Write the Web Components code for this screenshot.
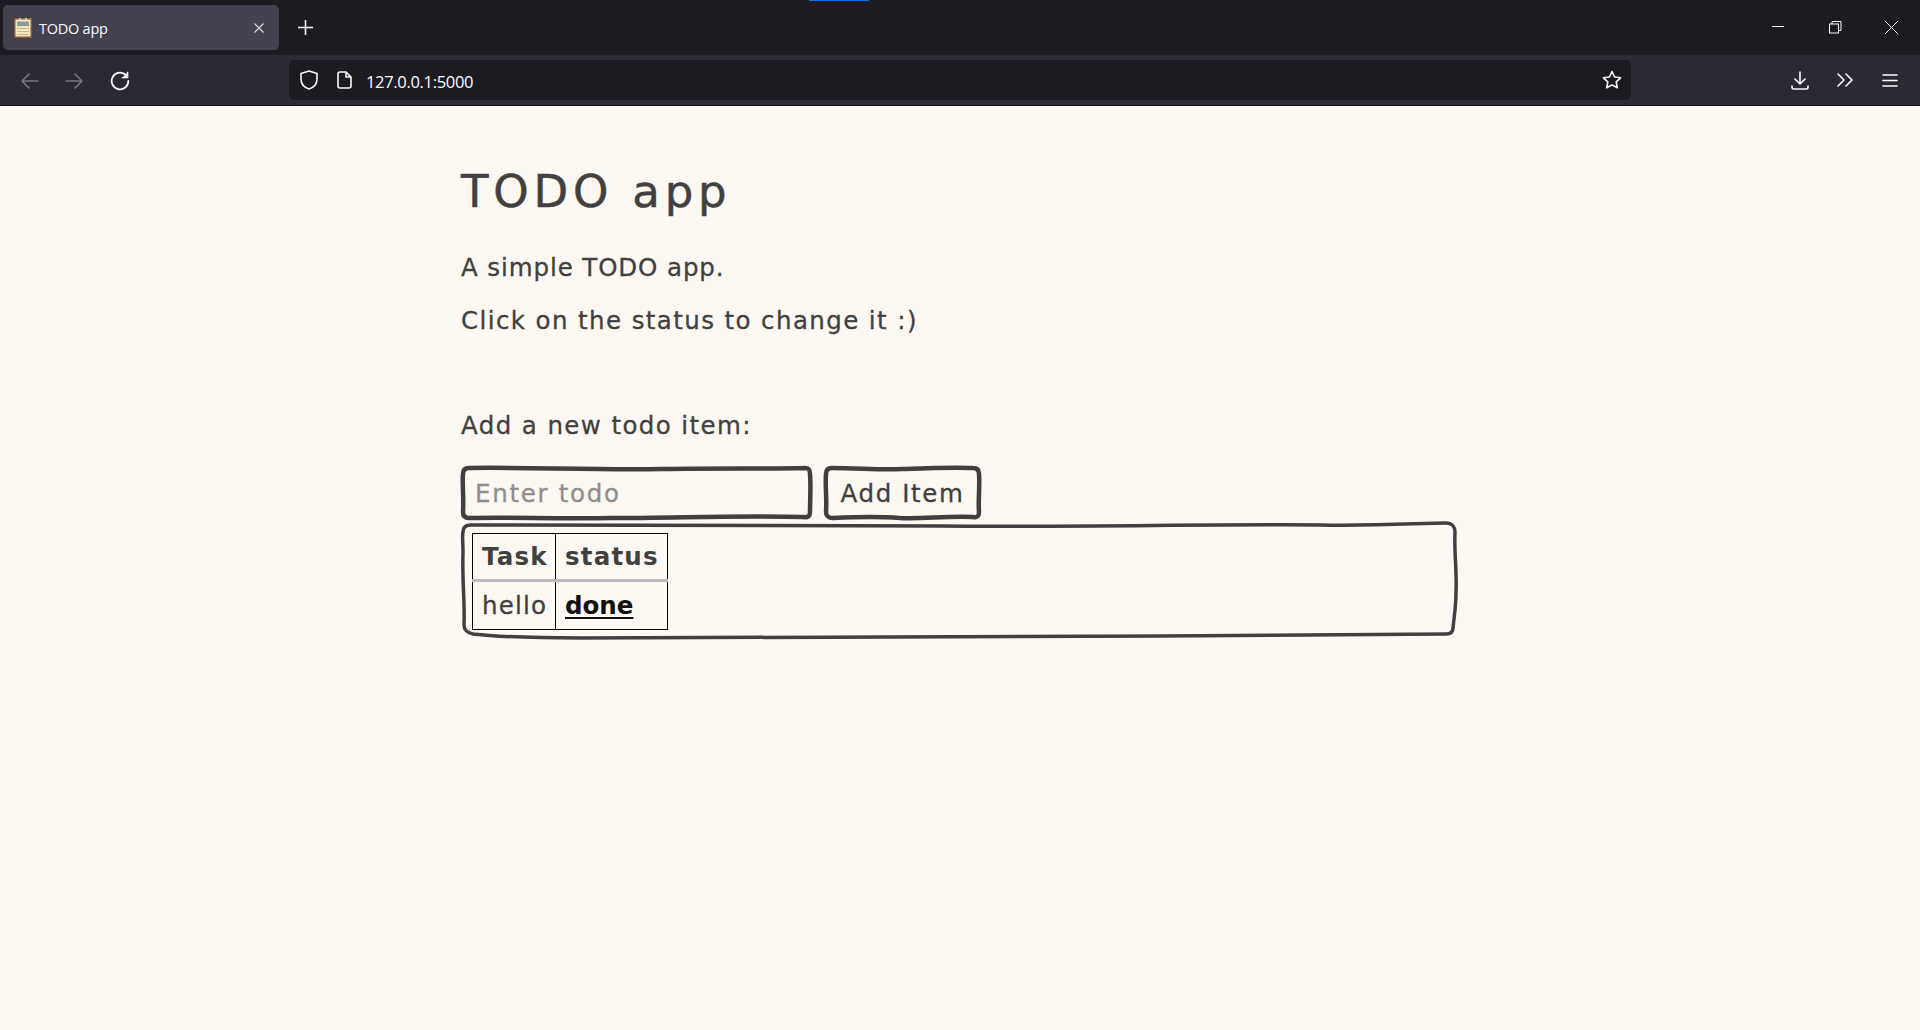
<!DOCTYPE html>
<html>
<head>
<meta charset="utf-8">
<title>TODO app</title>
<style>
    html, body { margin: 0; height: 100%; }
    body { background: #fdf8f2; display: flex; flex-direction: column; height: 1030px; overflow: hidden; }
</style>
</head>
<body>
<browser-tabstrip></browser-tabstrip>
<browser-toolbar url="127.0.0.1:5000"></browser-toolbar>
<todo-page></todo-page>

<script>
class BrowserTabstrip extends HTMLElement {
    constructor() {
        super();
        this.attachShadow({ mode: 'open' });
    }

    connectedCallback() {
        this.shadowRoot.innerHTML = `
        <style>
            :host {
                display: flex;
                align-items: flex-start;
                position: relative;
                height: 55px;
                background: #1c1b22;
                color: #fbfbfe;
                font-family: "Open Sans", "Liberation Sans", sans-serif;
                flex: none;
            }
            .tab {
                display: flex;
                align-items: center;
                box-sizing: border-box;
                width: 276px;
                height: 45px;
                margin: 5px 0 0 3px;
                padding: 1px 15px 0 11px;
                background: #42414d;
                border-radius: 5px;
                font-size: 14.5px;
                letter-spacing: -0.25px;
            }
            .fav { width: 18px; height: 20px; margin-right: 7px; }
            .title { flex: 1; }
            .plus { margin: 20px 0 0 19px; width: 15px; height: 15px; }
            .win { margin-left: auto; display: flex; align-items: center; height: 13px; margin-top: 21px; padding-right: 22px; gap: 43.5px; }
            .win svg { display: block; width: 13px; height: 13px; }
            .accent { position: absolute; left: 809px; top: 0; width: 60px; height: 1px; background: #0a6fd8; }
            svg { fill: none; stroke: currentColor; }
        </style>
        <div class="accent"></div>
        <div class="tab">
            <svg class="fav" viewBox="0 0 18 20" style="stroke:none">
                <rect width="18" height="20" fill="#8b5a34"/>
                <rect x="1.5" y="1.5" width="15" height="17" fill="#f3e6c4"/>
                <rect x="3" y="3.500" width="12" height="4.500" fill="#8c9a9c"/>
                <rect x="5" y="0" width="2" height="2" fill="#cfcabc"/>
                <rect x="11" y="0" width="2" height="2" fill="#cfcabc"/>
                <rect x="3" y="10" width="12" height="1" fill="#cdb98a"/>
                <rect x="3" y="13" width="12" height="1" fill="#cdb98a"/>
                <rect x="3" y="16" width="12" height="1" fill="#cdb98a"/>
            </svg>
            <span class="title">TODO app</span>
            <svg width="10" height="10" viewBox="0 0 10 10" stroke-width="1.2" style="color:#d8d8dc"><path d="M0.5 0.5l9 9M9.5 0.5l-9 9"/></svg>
        </div>
        <svg class="plus" viewBox="0 0 15 15" stroke-width="1.6"><path d="M7.5 0v15M0 7.5h15"/></svg>
        <div class="win">
            <svg viewBox="0 0 13 13" stroke-width="1"><path d="M0 5.500h12"/></svg>
            <svg viewBox="0 0 13 13" stroke-width="1"><rect x="0.5" y="3" width="9" height="9"/><path d="M3 3V0.5h9V9.500H9.500"/></svg>
            <svg viewBox="0 0 13 13" stroke-width="1"><path d="M0 0l13 13M13 0L0 13"/></svg>
        </div>
        `;
    }
}

class BrowserToolbar extends HTMLElement {
    constructor() {
        super();
        this.attachShadow({ mode: 'open' });
    }

    connectedCallback() {
        const url = this.getAttribute('url');
        this.shadowRoot.innerHTML = `
        <style>
            :host {
                display: flex;
                align-items: center;
                box-sizing: border-box;
                height: 51px;
                background: #2b2a33;
                border-bottom: 1px solid #0c0c0d;
                color: #fbfbfe;
                font-family: "Open Sans", "Liberation Sans", sans-serif;
                flex: none;
            }
            svg { fill: none; stroke: currentColor; stroke-width: 1.6; stroke-linecap: round; stroke-linejoin: round; display: block; flex: none; }
            .nav { display: flex; align-items: center; gap: 26px; padding: 2px 0 0 21px; width: 289px; box-sizing: border-box; }
            .off { color: #77767d; }
            .urlbar {
                display: flex;
                align-items: center;
                box-sizing: border-box;
                width: 1342px;
                height: 40px;
                padding: 0 9px 0 11px;
                background: #1c1b22;
                border-radius: 5px;
                font-size: 16.5px;
                letter-spacing: -0.32px;
            }
            .url { flex: 1; margin-left: 14px; padding-top: 2px; }
            .tools { display: flex; align-items: center; gap: 28px; padding-left: 160px; }
        </style>
        <div class="nav">
            <svg class="off" width="18" height="16" viewBox="0 0 18 16"><path d="M17 8H1M8 1L1 8l7 7"/></svg>
            <svg class="off" width="18" height="16" viewBox="0 0 18 16"><path d="M1 8h16M10 1l7 7-7 7"/></svg>
            <svg width="20" height="20" viewBox="0 0 18 18" style="margin-left:1px"><path d="M16.500 9A7.500 7.500 0 1 1 13.500 3"/><path d="M16 1v5h-5" fill="currentColor" stroke-width="1"/></svg>
        </div>
        <div class="urlbar">
            <svg width="18" height="20" viewBox="0 0 18 20"><path d="M9 1l8 2.500V9c0 5-3.500 8.500-8 10C4.500 17.500 1 14 1 9V3.500z"/></svg>
            <svg width="15" height="18" viewBox="0 0 15 18" style="margin-left:19px"><path d="M3 1h6l5 5v9a2 2 0 0 1-2 2H3a2 2 0 0 1-2-2V3a2 2 0 0 1 2-2zM9 1v5h5"/></svg>
            <span class="url">${url}</span>
            <svg width="20" height="20" viewBox="0 0 20 20"><path d="M10 1.500l2.600 5.500 6 .8-4.400 4.100 1.100 5.900L10 14.900l-5.300 2.900 1.100-5.900L1.400 7.800l6-.8z"/></svg>
        </div>
        <div class="tools">
            <svg width="18" height="19" viewBox="0 0 18 19"><path d="M9 1v12M4 8l5 5 5-5M1 15v1.500A1.500 1.500 0 0 0 2.500 18h13a1.500 1.500 0 0 0 1.500-1.500V15"/></svg>
            <svg width="17" height="14" viewBox="0 0 17 14"><path d="M1 1l6 6-6 6M9 1l6 6-6 6"/></svg>
            <svg width="16" height="13" viewBox="0 0 16 13"><path d="M1 1h14M1 6.500h14M1 12h14"/></svg>
        </div>
        `;
    }
}

// hand drawn outline, path is given in the box's own pixels
class SketchBox extends HTMLElement {
    constructor() {
        super();
        this.attachShadow({ mode: 'open' });
    }

    connectedCallback() {
        const w = this.getAttribute('w');
        const h = this.getAttribute('h');
        this.shadowRoot.innerHTML = `
        <style>
            :host {
                display: block;
                position: relative;
                box-sizing: border-box;
                width: ${w}px;
                height: ${h}px;
            }
            svg { position: absolute; left: 0; top: 0; pointer-events: none; overflow: visible; }
            path { fill: none; stroke: #41403e; stroke-width: ${this.getAttribute('sw') || 3}; stroke-linejoin: round; }
        </style>
        <slot></slot>
        <svg width="${w}" height="${h}" viewBox="0 0 ${w} ${h}"><path d="${this.getAttribute('d')}"/></svg>
        `;
    }
}

class TodoForm extends HTMLElement {
    constructor() {
        super();
        this.attachShadow({ mode: 'open' });
    }

    connectedCallback() {
        this.shadowRoot.innerHTML = `
        <style>
            :host { display: flex; gap: 12px; font: inherit; letter-spacing: 1.6px; -webkit-text-stroke: 0.3px; }
            input, button {
                box-sizing: border-box;
                width: 100%;
                height: 100%;
                background: none;
                border: 0;
                outline: 0;
                margin: 0;
                font: inherit;
                letter-spacing: inherit;
                -webkit-text-stroke: inherit;
                color: #41403e;
            }
            input { padding: 0 0 0 14px; letter-spacing: 1.7px; }
            input::placeholder { color: #8e8d8b; opacity: 1; }
            button { padding: 0; }
        </style>
        <sketch-box w="351" h="54" sw="4.5" d="M8 2C60 1 130 4 200 3 C260 2 310 3 344 2 C348 2 349 4 349 8 C350 20 349 36 349 46 C349 50 347 52 342 51 C280 49 215 52 150 52 C95 53 50 51 8 52 C4 52 2 50 2 46 C3 30 1 18 2 8 C2 4 4 2 8 2Z">
            <input placeholder="Enter todo">
        </sketch-box>
        <sketch-box w="157" h="54" sw="4.5" d="M8 2C35 2 55 4 78 3 C105 2 130 1 149 2 C153 2 155 4 155 8 C156 20 154 34 155 46 C155 50 153 52 149 51 C120 50 100 53 76 52 C50 50 30 51 8 52 C4 52 2 49 2 46 C3 32 1 20 2 8 C2 4 4 2 8 2Z">
            <button type="button">Add Item</button>
        </sketch-box>
        `;
    }
}

class TodoTable extends HTMLElement {
    constructor() {
        super();
        this.attachShadow({ mode: 'open' });
    }

    connectedCallback() {
        this.shadowRoot.innerHTML = `
        <style>
            :host { display: block; padding: 11px 0 0 11px; font: inherit; letter-spacing: 1.2px; }
            table { border-collapse: collapse; font: inherit; color: inherit; }
            th, td {
                border: 1px solid #000;
                padding: 0 7px 0 9px;
                text-align: left;
                box-sizing: border-box;
            }
            th { height: 47px; font-weight: bold; border-bottom: 3px solid #bbb; }
            th:first-child { width: 83px; }
            th:last-child { width: 112px; }
            td { height: 49px; border-top: 0; -webkit-text-stroke: 0.3px; }
            .status { font-weight: bold; color: #111; letter-spacing: 0; text-decoration: underline; text-underline-offset: 3px; -webkit-text-stroke: 0; }
        </style>
        <table>
            <tr><th>Task</th><th>status</th></tr>
            <tr><td>hello</td><td><a class="status">done</a></td></tr>
        </table>
        `;
    }
}

class TodoPage extends HTMLElement {
    constructor() {
        super();
        this.attachShadow({ mode: 'open' });
    }

    connectedCallback() {
        this.shadowRoot.innerHTML = `
        <style>
            :host {
                display: block;
                flex: 1;
                background: #fdf8f2;
                color: #41403e;
                font-family: "DejaVu Sans", sans-serif;
                font-size: 24.5px;
            }
            main { width: 998px; margin: 0 auto; padding-top: 56px; }
            h1 { margin: 0; font-size: 45px; font-weight: normal; line-height: 60px; letter-spacing: 4.8px; -webkit-text-stroke: 0.5px; }
            p { margin: 0; line-height: 30px; letter-spacing: 1.4px; -webkit-text-stroke: 0.3px; }
            .first { margin-top: 31px; letter-spacing: 0.9px; }
            .second { margin-top: 23px; }
            .third { margin-top: 75px; }
            todo-form { margin-top: 25px; }
            .list { margin-top: 2px; }
        </style>
        <main>
            <h1>TODO app</h1>
            <p class="first">A simple TODO app.</p>
            <p class="second">Click on the status to change it :)</p>
            <p class="third">Add a new todo item:</p>
            <todo-form></todo-form>
            <sketch-box class="list" w="996" h="117" sw="3.5" d="M10 3C120 2 300 5 480 4 C620 5 760 2 860 3 C920 4 960 1 985 1 C991 1 994 5 994 10 C993 30 996 50 995 70 C995 85 993 95 992 106 C992 110 990 112 985 112 C900 113 800 113 700 114 C500 113 300 115 120 116 C70 116 30 114 12 112 C6 111 3 107 3 103 C4 80 1 60 2 30 C2 20 1 14 2 10 C2 5 5 3 10 3Z">
                <todo-table></todo-table>
            </sketch-box>
        </main>
        `;
    }
}

customElements.define('browser-tabstrip', BrowserTabstrip);
customElements.define('browser-toolbar', BrowserToolbar);
customElements.define('sketch-box', SketchBox);
customElements.define('todo-form', TodoForm);
customElements.define('todo-table', TodoTable);
customElements.define('todo-page', TodoPage);
</script>
</body>
</html>
